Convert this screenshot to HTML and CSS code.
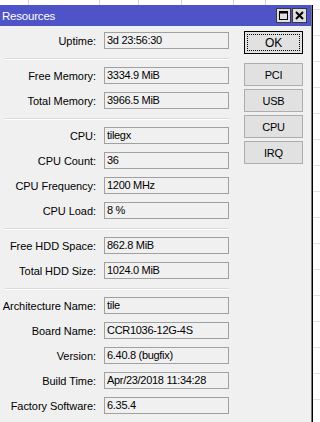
FILE: index.html
```html
<!DOCTYPE html>
<html lang="en">

<head>
    <meta charset="UTF-8" />
    <meta name="viewport" content="width=device-width, initial-scale=1.0" />
    <title>Resources</title>
    <link rel="stylesheet" href="styles.css">
</head>

<body>
    <div class="desk-top"></div>

    <div class="window">
        <div class="titlebar">
            <span class="title">Resources</span>
            <div class="title-buttons">
                <span class="tbtn">
                    <svg width="13" height="13" viewBox="0 0 13 13">
                        <rect x="2.5" y="2.5" width="8" height="8" fill="none" stroke="#000" stroke-width="1" />
                        <line x1="2" y1="3.5" x2="11" y2="3.5" stroke="#000" stroke-width="2" />
                    </svg>
                </span>
                <span class="tbtn">
                    <svg width="13" height="13" viewBox="0 0 13 13">
                        <path d="M3 3 L10 10 M10 3 L3 10" stroke="#000" stroke-width="2" />
                    </svg>
                </span>
            </div>
        </div>

        <div class="content">
            <div class="form">
                <div class="row"><label>Uptime:</label><div class="field">3d 23:56:30</div></div>
                <div class="sep"></div>
                <div class="row"><label>Free Memory:</label><div class="field">3334.9 MiB</div></div>
                <div class="row"><label>Total Memory:</label><div class="field">3966.5 MiB</div></div>
                <div class="sep"></div>
                <div class="row"><label>CPU:</label><div class="field">tilegx</div></div>
                <div class="row"><label>CPU Count:</label><div class="field">36</div></div>
                <div class="row"><label>CPU Frequency:</label><div class="field">1200 MHz</div></div>
                <div class="row"><label>CPU Load:</label><div class="field">8 %</div></div>
                <div class="sep"></div>
                <div class="row"><label>Free HDD Space:</label><div class="field">862.8 MiB</div></div>
                <div class="row"><label>Total HDD Size:</label><div class="field">1024.0 MiB</div></div>
                <div class="sep"></div>
                <div class="row"><label>Architecture Name:</label><div class="field">tile</div></div>
                <div class="row"><label>Board Name:</label><div class="field">CCR1036-12G-4S</div></div>
                <div class="row"><label>Version:</label><div class="field">6.40.8 (bugfix)</div></div>
                <div class="row"><label>Build Time:</label><div class="field">Apr/23/2018 11:34:28</div></div>
                <div class="row"><label>Factory Software:</label><div class="field">6.35.4</div></div>
            </div>

            <div class="actions">
                <button class="btn btn-ok">OK</button>
                <button class="btn">PCI</button>
                <button class="btn">USB</button>
                <button class="btn">CPU</button>
                <button class="btn">IRQ</button>
            </div>
        </div>
    </div>
</body>

</html>
```

FILE: styles.css
```css
* {
    box-sizing: border-box;
}

body {
    margin: 0;
    height: 100vh;
    overflow: hidden;
    font-family: 'Liberation Sans', Arial, sans-serif;
    font-size: 11px;
    letter-spacing: -0.3px;
    color: #000;
    background: repeating-linear-gradient(to bottom, #fff 0, #fff 9px, #e2e2e2 9px, #e2e2e2 10px, #fff 10px, #fff 26px);
}

.desk-top {
    height: 5px;
    background:
        linear-gradient(#d6d6d6, #d6d6d6) 28px 0 / 1px 100% no-repeat,
        linear-gradient(#d6d6d6, #d6d6d6) 99px 0 / 1px 100% no-repeat,
        linear-gradient(#d6d6d6, #d6d6d6) 138px 0 / 1px 100% no-repeat,
        linear-gradient(#d6d6d6, #d6d6d6) 181px 0 / 1px 100% no-repeat,
        linear-gradient(#d6d6d6, #d6d6d6) 233px 0 / 1px 100% no-repeat,
        linear-gradient(#d6d6d6, #d6d6d6) 265px 0 / 1px 100% no-repeat,
        #fff;
}

.window {
    width: 313px;
    height: calc(100vh - 5px);
    background: #f0f0f0;
    border-right: 1px solid #000;
    box-shadow: inset -1px 0 0 #7a7a7a;
}

.titlebar {
    height: 21px;
    width: 311px;
    background: #4f53c8;
    display: flex;
    align-items: center;
    justify-content: space-between;
    padding: 0 4px 0 2px;
}

.title {
    color: #fff;
    font-size: 11.5px;
    letter-spacing: -0.2px;
}

.title-buttons {
    display: flex;
    gap: 1px;
}

.tbtn {
    width: 15px;
    height: 15px;
    background: #dedede;
    border: 1px solid #3a3a3a;
    display: flex;
    align-items: center;
    justify-content: center;
}

.content {
    display: flex;
    padding-top: 5px;
}

.form {
    width: 229px;
    padding-top: 1px;
    display: flex;
    flex-direction: column;
    gap: 8px;
}

.row {
    display: grid;
    grid-template-columns: 96px 125px;
    column-gap: 8px;
    align-items: center;
    height: 17px;
}

.row label {
    text-align: right;
    white-space: nowrap;
    letter-spacing: -0.05px;
}

.field {
    height: 17px;
    border: 1px solid #a0a0a0;
    line-height: 15px;
    padding: 0 2px;
    white-space: nowrap;
}

.sep {
    height: 1px;
    margin: 1px 0 0 5px;
    background: #dadada;
    box-shadow: 0 1px 0 #fff;
}

.actions {
    margin-left: 15px;
    display: flex;
    flex-direction: column;
    gap: 3px;
}

.btn {
    width: 59px;
    height: 23px;
    padding: 0;
    font-family: inherit;
    font-size: 11px;
    letter-spacing: -0.2px;
    color: #000;
    background: #e1e1e1;
    border: 1px solid #adadad;
}

.btn-ok {
    position: relative;
    border-color: #000;
    margin-bottom: 6px;
    font-size: 12px;
}

.btn-ok::after {
    content: '';
    position: absolute;
    inset: 2px;
    border: 1px dotted #000;
}
```
